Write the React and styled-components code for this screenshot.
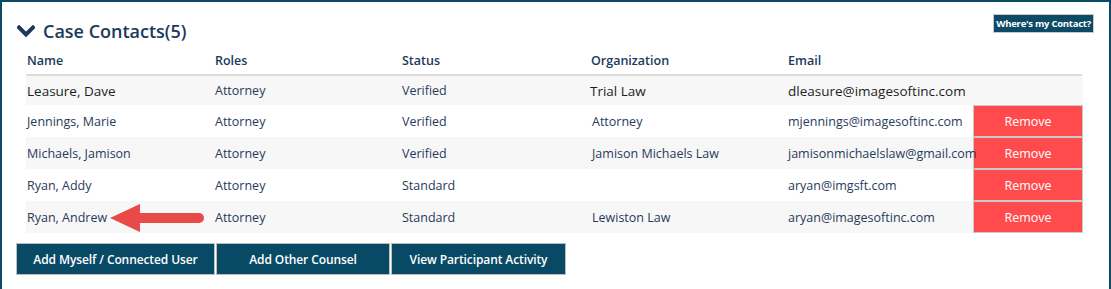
import styled, { createGlobalStyle } from 'styled-components';

const GlobalStyle = createGlobalStyle`
  html, body {
    margin: 0;
    padding: 0;
    background: #ffffff;
  }
  body {
    font-family: "Open Sans", "Noto Sans", Arial, sans-serif;
  }
`

const Frame = styled.div`
  box-sizing: border-box;
  width: 1111px;
  height: 289px;
  border: 2px solid #0c4a66;
  border-bottom: none;
  padding: 12px 15px 0 14px;
`

const TopRow = styled.div`
  display: flex;
  justify-content: space-between;
  align-items: flex-start;
`

const Title = styled.h2`
  display: flex;
  align-items: center;
  gap: 8px;
  margin: 6px 0 2px 1px;
  font-size: 18px;
  line-height: 22px;
  font-weight: 600;
  color: #1b3a5c;
`

const HelpButton = styled.button`
  height: 19px;
  padding: 0 2px;
  background: #0c4a66;
  color: #ffffff;
  border: 1px solid #c8c8c8;
  font-family: inherit;
  font-size: 9.5px;
  font-weight: 700;
  letter-spacing: -0.25px;
  cursor: pointer;
`

const Table = styled.div`
  margin: 2px 0 0 10px;
  width: 1057px;
`

const cols = '188px 187px 189px 197px 186px 110px';

const HeaderRow = styled.div`
  display: grid;
  grid-template-columns: ${cols};
  height: 28px;
  align-items: center;
  border-bottom: 2px solid #dcdcdc;
  width: 1056px;
`

const HeadCell = styled.div`
  font-size: 12.5px;
  font-weight: 600;
  color: #1b3a5c;
  padding-left: 1px;
`

const Row = styled.div`
  display: grid;
  grid-template-columns: ${cols};
  align-items: center;
  min-height: ${p => (p.$first ? 29 : 32)}px;
  background: ${p => (p.$striped ? '#f7f7f7' : '#ffffff')};
`

const Cell = styled.div`
  position: relative;
  font-size: ${p => (p.$strong ? 13.5 : 12.5)}px;
  color: ${p => (p.$strong ? '#1e1e1e' : '#283a5a')};
  padding-left: ${p => p.$pad ?? 1}px;
  white-space: nowrap;
`

const RemoveButton = styled.button`
  box-sizing: border-box;
  width: 110px;
  height: 32px;
  background: #ff4b4b;
  color: #ffffff;
  border: 1px solid #c9c9c9;
  font-family: inherit;
  font-size: 12.5px;
  cursor: pointer;
`

const Actions = styled.div`
  display: flex;
  gap: 1px;
  margin-top: 10px;
`

const ActionButton = styled.button`
  box-sizing: border-box;
  width: ${p => p.$w}px;
  height: 32px;
  background: #084a66;
  color: #ffffff;
  border: 1px solid #bdbdbd;
  font-family: inherit;
  font-size: 12px;
  font-weight: 600;
  letter-spacing: -0.1px;
  cursor: pointer;
`

const Pointer = styled.svg`
  position: absolute;
  display: block;
  left: 84px;
  top: 50%;
  width: 94px;
  height: 30px;
  margin-top: -14px;
`

const contacts = [
  { name: 'Leasure, Dave', role: 'Attorney', status: 'Verified', org: 'Trial Law', email: 'dleasure@imagesoftinc.com', first: true },
  { name: 'Jennings, Marie', role: 'Attorney', status: 'Verified', org: 'Attorney', email: 'mjennings@imagesoftinc.com' },
  { name: 'Michaels, Jamison', role: 'Attorney', status: 'Verified', org: 'Jamison Michaels Law', email: 'jamisonmichaelslaw@gmail.com' },
  { name: 'Ryan, Addy', role: 'Attorney', status: 'Standard', org: '', email: 'aryan@imgsft.com' },
  { name: 'Ryan, Andrew', role: 'Attorney', status: 'Standard', org: 'Lewiston Law', email: 'aryan@imagesoftinc.com', arrow: true },
]

function Chevron() {
  return (
    <svg width="18" height="12" viewBox="0 0 18 12">
      <path d="M2 2.5 L9 9.5 L16 2.5" fill="none" stroke="#1b3a5c" strokeWidth="4" strokeLinecap="square" />
    </svg>
  )
}

function App() {
  return (
    <>
      <GlobalStyle />
      <Frame>
        <TopRow>
          <Title>
            <Chevron />
            Case Contacts(5)
          </Title>
          <HelpButton>Where's my Contact?</HelpButton>
        </TopRow>
        <Table>
          <HeaderRow>
            <HeadCell>Name</HeadCell>
            <HeadCell>Roles</HeadCell>
            <HeadCell>Status</HeadCell>
            <HeadCell>Organization</HeadCell>
            <HeadCell>Email</HeadCell>
            <div />
          </HeaderRow>
          {contacts.map((c, i) => (
            <Row key={c.name} $striped={i % 2 === 0} $first={c.first}>
              <Cell $strong={c.first}>
                {c.name}
                {c.arrow && (
                  <Pointer viewBox="0 0 94 30">
                    <path d="M0 15 L30 1 L30 29 Z" fill="#e84a47" />
                    <line x1="28" y1="15" x2="89" y2="15" stroke="#e84a47" strokeWidth="10" strokeLinecap="round" />
                  </Pointer>
                )}
              </Cell>
              <Cell>{c.role}</Cell>
              <Cell>{c.status}</Cell>
              <Cell $strong={c.first} $pad={c.first ? 0 : 2}>{c.org}</Cell>
              <Cell $strong={c.first}>{c.email}</Cell>
              <div>{!c.first && <RemoveButton>Remove</RemoveButton>}</div>
            </Row>
          ))}
        </Table>
        <Actions>
          <ActionButton $w={199}>Add Myself / Connected User</ActionButton>
          <ActionButton $w={174}>Add Other Counsel</ActionButton>
          <ActionButton $w={175}>View Participant Activity</ActionButton>
        </Actions>
      </Frame>
    </>
  )
}

export default App
